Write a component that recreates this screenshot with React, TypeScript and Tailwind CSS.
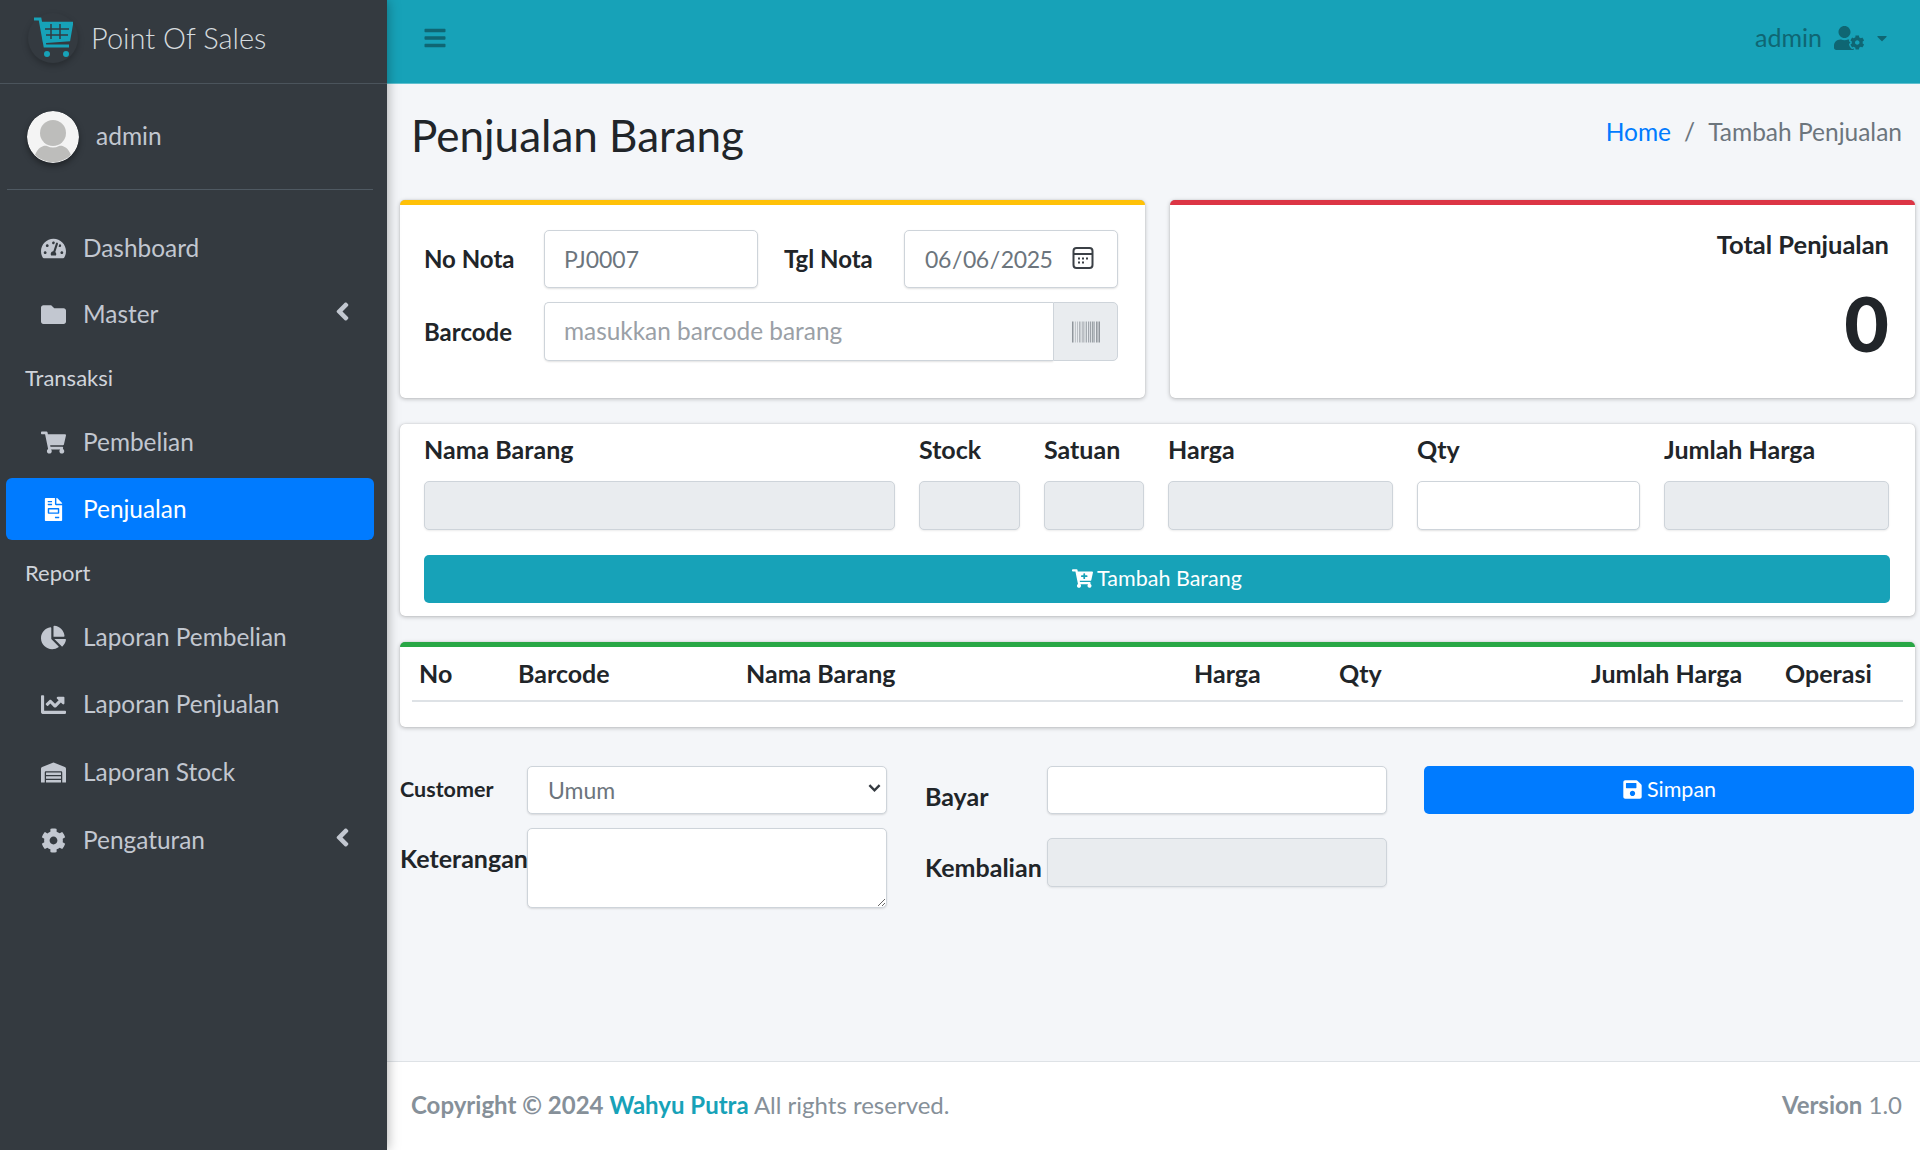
import React from "react";
import {
  FaTachometerAlt, FaFolder, FaShoppingCart, FaFileInvoice, FaChartPie, FaChartLine, FaWarehouse, FaCog,
  FaAngleLeft, FaBars, FaUserCog, FaCartPlus, FaSave, FaBarcode, FaCaretDown,
} from "react-icons/fa";

function NavItem({ icon, label, active, arrow, gap = "mt-[5px]" }: { icon: React.ReactNode; label: string; active?: boolean; arrow?: boolean; gap?: string }) {
  return (
    <div className={`${gap} ${active
      ? "mx-[6px] w-[368px] h-[62px] rounded-[6px] bg-[#007bff] text-white flex items-center"
      : "mx-[6px] w-[368px] h-[62px] rounded-[6px] text-[#c2c7d0] flex items-center"}`}>
      <span className="w-[77px] flex justify-center pl-[17px] text-[25px]">{icon}</span>
      <span className="text-[24.4px] flex-1">{label}</span>
      {arrow && <FaAngleLeft className="text-[29px] mr-[17px] mb-[6px]" />}
    </div>
  );
}

function NavHeader({ label }: { label: string }) {
  return <div className="h-[61px] pt-[3px] pl-[25px] flex items-center text-[22px] text-[#d0d4db]">{label}</div>;
}

function Cart() {
  return (
    <svg viewBox="0 0 40 42" className="w-[40px] h-[42px] text-[#17a2b8]" fill="none" stroke="currentColor">
      <path d="M1 2h6l5 27h24" strokeWidth="3" />
      <path d="M8 6h31l-3 17-26 2" strokeWidth="2.5" fill="#17a2b8" />
      <path d="M12 12h24M13 18h22M18 7v15M27 7v15" stroke="#343a40" strokeWidth="1.5" />
      <circle cx="14" cy="37" r="3" fill="currentColor" stroke="none" />
      <circle cx="33" cy="37" r="3" fill="currentColor" stroke="none" />
    </svg>
  );
}

function Avatar() {
  return (
    <svg viewBox="0 0 52 52" className="w-[52px] h-[52px] rounded-full shadow-[0_3px_6px_rgba(0,0,0,.4)]">
      <circle cx="26" cy="26" r="26" fill="#f4f4f4" />
      <circle cx="26" cy="22" r="13" fill="#bdbdbb" />
      <path d="M8 44c3-8 9-10 12-9 4 2 8 2 12 0 3-1 9 1 12 9a26 26 0 0 1-36 0z" fill="#bdbdbb" />
    </svg>
  );
}

function CalendarIcon() {
  return (
    <svg viewBox="0 0 22 24" className="w-[22px] h-[24px] text-[#3b4046]" fill="none" stroke="currentColor">
      <rect x="1.5" y="2" width="19" height="20" rx="3" strokeWidth="2" />
      <path d="M1.5 8h19" strokeWidth="2" />
      <path d="M6 12.5h2M10 12.5h2M14 12.5h2M6 16.5h2M10 16.5h2" strokeWidth="2" />
    </svg>
  );
}

const field = "border border-[#ced4da] rounded-[5px] bg-white text-[23px] outline-none shadow-[0_1px_2px_rgba(0,0,0,.12)]";
const disabled = "border border-[#ced4da] rounded-[5px] bg-[#e9ecef] h-[49px] shadow-[0_1px_2px_rgba(0,0,0,.08)]";
const card = "bg-white rounded-[5px] shadow-[0_0_1px_rgba(0,0,0,.2),0_1px_4px_rgba(0,0,0,.25)]";

export default function App() {
  return (
    <div className="h-screen w-full flex overflow-hidden bg-[#f4f6f9] font-[Lato,sans-serif] text-[#212529]">
      <aside className="w-[387px] shrink-0 bg-[#343a40] shadow-[0_0_12px_rgba(0,0,0,.35)] z-10 flex flex-col">
        <div className="h-[84px] border-b border-[#4b545c] pl-[28px] pb-[8px] flex items-center gap-[13px]">
          <div className="w-[50px] h-[50px] rounded-full shadow-[0_3px_6px_rgba(0,0,0,.25)] flex items-center justify-center">
            <Cart />
          </div>
          <span className="text-[29px] font-light text-[#d5dade]">Point Of Sales</span>
        </div>
        <div className="h-[106px] mx-[7px] w-[366px] border-b border-[#4f5962] pl-[20px] flex items-center gap-[17px]">
          <Avatar />
          <span className="text-[24.5px] text-[#c2c7d0]">admin</span>
        </div>
        <nav className="pt-[22px] flex flex-col">
          <NavItem icon={<FaTachometerAlt />} label="Dashboard" />
          <NavItem icon={<FaFolder />} label="Master" arrow gap="mt-[4px]" />
          <NavHeader label="Transaksi" />
          <NavItem icon={<FaShoppingCart />} label="Pembelian" />
          <NavItem icon={<FaFileInvoice className="text-[23px]" />} label="Penjualan" active />
          <NavHeader label="Report" />
          <NavItem icon={<FaChartPie />} label="Laporan Pembelian" />
          <NavItem icon={<FaChartLine />} label="Laporan Penjualan" />
          <NavItem icon={<FaWarehouse />} label="Laporan Stock" gap="mt-[6px]" />
          <NavItem icon={<FaCog />} label="Pengaturan" arrow gap="mt-[6px]" />
        </nav>
      </aside>

      <div className="flex-1 min-w-0 flex flex-col">
        <header className="h-[84px] shrink-0 bg-[#17a2b8] border-b border-[#5fc0cf] pl-[36px] pr-[30px] pb-[7px] flex items-center justify-between text-[#0f6673]">
          <FaBars className="text-[24px]" />
          <div className="flex items-center text-[25px]">
            <span>admin</span>
            <FaUserCog className="text-[30px] ml-[12px]" />
            <FaCaretDown className="text-[16px] ml-[10px]" />
          </div>
        </header>

        <main className="flex-1 min-h-0 pl-[13px] pr-[5px]">
          <div className="h-[116px] pl-[11px] pr-[13px] pb-[14px] flex items-center justify-between">
            <h1 className="text-[44px] font-normal">Penjualan Barang</h1>
            <div className="text-[24.5px] text-[#6c757d] flex gap-[13px] pb-[6px]">
              <span className="text-[#007bff]">Home</span>
              <span>/</span>
              <span>Tambah Penjualan</span>
            </div>
          </div>

          <div className="flex gap-[25px]">
            <section className={`${card} w-[745px] h-[198px] border-t-[5px] border-[#ffc107] px-[24px] pt-[25px]`}>
              <div className="flex items-center">
                <label className="w-[120px] text-[24px] font-bold">No Nota</label>
                <input defaultValue="PJ0007" className={`${field} w-[214px] h-[58px] px-[19px] text-[#6c757d]`} />
                <label className="ml-[26px] w-[120px] text-[24px] font-bold">Tgl Nota</label>
                <div className="relative w-[214px] h-[58px]">
                  <input type="date" defaultValue="2025-06-06" className={`${field} w-full h-full pl-[19px] pr-[20px] text-[21.5px] tracking-[-0.4px] text-[#6c757d] [&::-webkit-calendar-picker-indicator]:opacity-0`} />
                  <span className="absolute right-[24px] top-[16px] flex"><CalendarIcon /></span>
                </div>
              </div>
              <div className="flex items-center mt-[14px]">
                <label className="w-[120px] text-[24px] font-bold">Barcode</label>
                <div className="flex w-[574px] h-[59px]">
                  <input placeholder="masukkan barcode barang" className={`${field} text-[24.4px] flex-1 min-w-0 rounded-r-none border-r-0 px-[19px] placeholder:text-[#9aa0a6]`} />
                  <div className="w-[65px] bg-[#e9ecef] border border-[#ced4da] rounded-r-[5px] flex items-center justify-center text-[#8f959b]">
                    <FaBarcode className="text-[28px]" />
                  </div>
                </div>
              </div>
            </section>
            <section className={`${card} flex-1 h-[198px] border-t-[5px] border-[#dc3545] pr-[26px] pt-[23px] text-right`}>
              <div className="text-[25.5px] font-bold leading-[32px]">Total Penjualan</div>
              <div className="text-[77px] font-black leading-[80px] mt-[22px]">0</div>
            </section>
          </div>

          <section className={`${card} h-[192px] mt-[26px] pl-[24px] pr-[25px]`}>
            <div className="grid grid-cols-[471px_101px_100px_225px_223px_225px] gap-x-[24px] pt-[7px]">
              {["Nama Barang", "Stock", "Satuan", "Harga", "Qty", "Jumlah Harga"].map((t) => (
                <label key={t} className="text-[25px] font-bold leading-[36px] whitespace-nowrap">{t}</label>
              ))}
              <div className={`${disabled} mt-[14px]`} />
              <div className={`${disabled} mt-[14px]`} />
              <div className={`${disabled} mt-[14px]`} />
              <div className={`${disabled} mt-[14px]`} />
              <input className={`${field} h-[49px] w-full mt-[14px]`} />
              <div className={`${disabled} mt-[14px]`} />
            </div>
            <button className="mt-[25px] w-full h-[48px] pb-[2px] rounded-[5px] bg-[#17a2b8] text-white text-[21.5px] flex items-center justify-center gap-[4px]">
              <FaCartPlus className="text-[21px]" />
              Tambah Barang
            </button>
          </section>

          <section className={`${card} h-[85px] mt-[26px] border-t-[5px] border-[#28a745] px-[12px]`}>
            <table className="w-full table-fixed border-b-[2px] border-[#dee2e6] text-left text-[25px] font-bold">
              <colgroup>
                <col className="w-[99px]" />
                <col className="w-[228px]" />
                <col className="w-[448px]" />
                <col className="w-[145px]" />
                <col className="w-[252px]" />
                <col className="w-[194px]" />
                <col />
              </colgroup>
              <thead>
                <tr>
                  {["No", "Barcode", "Nama Barang", "Harga", "Qty", "Jumlah Harga", "Operasi"].map((t) => (
                    <th key={t} className="h-[54px] pl-[7px] font-bold whitespace-nowrap">{t}</th>
                  ))}
                </tr>
              </thead>
            </table>
          </section>

          <div className="flex mt-[39px]">
            <div className="w-[487px] shrink-0">
              <div className="flex items-center">
                <label className="w-[127px] text-[21.5px] font-bold pb-[1px]">Customer</label>
                <div className="relative w-[360px] h-[48px]">
                  <select className={`${field} appearance-none w-full h-full pl-[20px] text-[#6c757d] text-[21px]`} defaultValue="Umum">
                    <option>Umum</option>
                  </select>
                  <svg viewBox="0 0 14 10" className="absolute right-[6px] top-[17px] w-[13px] h-[10px] text-[#343a40]" fill="none" stroke="currentColor" strokeWidth="2.6">
                    <path d="M1.5 2l5.5 5.5L12.5 2" />
                  </svg>
                </div>
              </div>
              <div className="flex mt-[14px]">
                <label className="w-[127px] text-[25px] font-bold pt-[12px] whitespace-nowrap">Keterangan</label>
                <textarea className={`${field} w-[360px] h-[80px]`} />
              </div>
            </div>
            <div className="w-[462px] shrink-0 ml-[38px]">
              <div className="flex">
                <label className="w-[122px] text-[25px] font-bold pt-[12px]">Bayar</label>
                <input className={`${field} w-[340px] h-[48px]`} />
              </div>
              <div className="flex mt-[22px]">
                <label className="w-[122px] text-[25px] font-bold pt-[11px]">Kembalian</label>
                <div className={`${disabled} w-[340px]`} />
              </div>
            </div>
            <button className="ml-[37px] w-[490px] h-[48px] pb-[2px] rounded-[5px] bg-[#007bff] text-white text-[21.5px] flex items-center justify-center gap-[4px]">
              <FaSave className="text-[21px]" />
              Simpan
            </button>
          </div>
        </main>

        <footer className="h-[89px] shrink-0 bg-white border-t border-[#dee2e6] pl-[24px] pr-[18px] pb-[2px] flex items-center justify-between text-[24px] text-[#869099]">
          <div>
            <b>Copyright © 2024 </b>
            <b className="text-[#17a2b8]">Wahyu Putra</b> All rights reserved.
          </div>
          <div><b>Version</b> 1.0</div>
        </footer>
      </div>
    </div>
  );
}
